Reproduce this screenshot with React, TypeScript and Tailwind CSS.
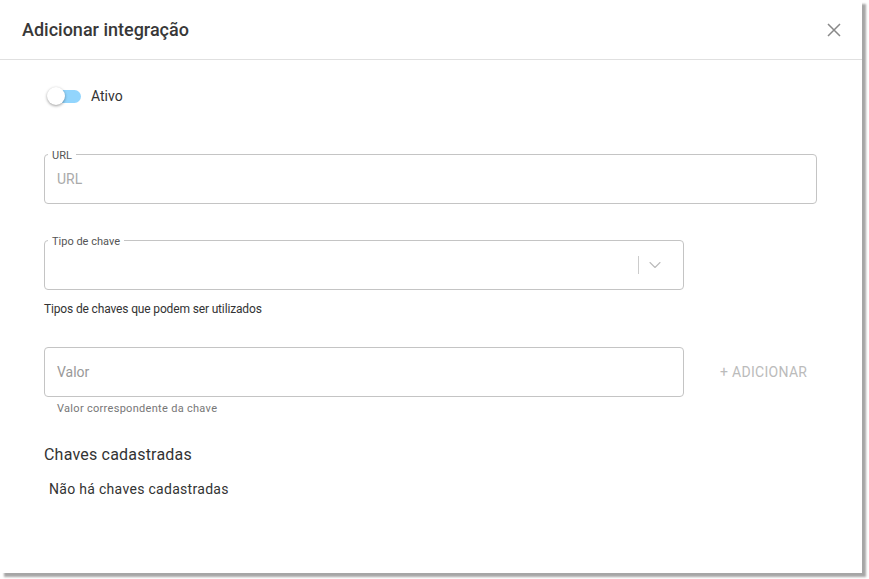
import { ChevronDown } from "lucide-react";

function Outlined({ label, children, className = "" }: { label?: string; children: React.ReactNode; className?: string }) {
  return (
    <div className={`relative h-[50px] rounded-[4px] border border-[#c4c4c4] ${className}`}>
      {label && (
        <span className="absolute -top-[6px] left-[3px] bg-white px-[4px] text-[11px] leading-[14px] text-[#555]">
          {label}
        </span>
      )}
      {children}
    </div>
  );
}

export default function App() {
  return (
    <div className="min-h-[579px] w-[869px] bg-white font-['Roboto',sans-serif]">
      <div className="flex h-[573px] w-[862px] flex-col bg-white shadow-[4px_4px_2px_rgba(0,0,0,0.35)]">
        {/* header */}
        <div className="flex h-[60px] items-center justify-between border-b border-[#e0e0e0] pl-[22px] pr-[20px]">
          <h2 className="text-[18px] font-medium text-[#383838]">Adicionar integração</h2>
          <svg width="14" height="14" viewBox="0 0 14 14" className="mr-[1px]">
            <path d="M1 1L13 13M13 1L1 13" stroke="#888" strokeWidth="1.5" />
          </svg>
        </div>

        {/* body */}
        <div className="flex flex-col pl-[44px] pr-[45px]">
          <div className="mt-[26px] flex h-[20px] items-center">
            <div className="relative ml-[3px] h-[18px] w-[34px]">
              <div className="absolute left-[5px] top-[3px] h-[13px] w-[29px] rounded-full bg-[#92d5fd]" />
              <div className="absolute left-0 top-0 h-[18px] w-[18px] rounded-full bg-white shadow-[0_1px_3px_rgba(0,0,0,0.4)]" />
            </div>
            <span className="ml-[10px] text-[14px] text-[#333]">Ativo</span>
          </div>

          <Outlined label="URL" className="mt-[48px] w-[773px]">
            <div className="flex h-full items-center pl-[12px] text-[14px] text-[#aaa]">URL</div>
          </Outlined>

          <Outlined label="Tipo de chave" className="mt-[36px] w-[640px]">
            <div className="flex h-full items-center justify-end pr-[18px]">
              <div className="h-[18px] w-px bg-[#ccc]" />
              <ChevronDown size={20} strokeWidth={1.3} className="ml-[6px] text-[#bbb]" />
            </div>
          </Outlined>
          <p className="mt-[10px] text-[12px] tracking-[-0.15px] text-[#333]">Tipos de chaves que podem ser utilizados</p>

          <div className="mt-[29px] flex items-center">
            <Outlined className="w-[640px]">
              <div className="flex h-full items-center pl-[12px] text-[14px] text-[#999]">Valor</div>
            </Outlined>
            <span className="ml-[36px] text-[14px] tracking-[0.3px] text-[#bbb]">+ ADICIONAR</span>
          </div>
          <p className="ml-[13px] mt-[4px] text-[11px] tracking-[0.3px] text-[#777]">Valor correspondente da chave</p>

          <h3 className="mt-[25px] text-[16px] tracking-[0.2px] text-[#333]">Chaves cadastradas</h3>
          <p className="ml-[5px] mt-[12px] text-[14px] tracking-[0.3px] text-[#333]">Não há chaves cadastradas</p>
        </div>
      </div>
    </div>
  );
}
